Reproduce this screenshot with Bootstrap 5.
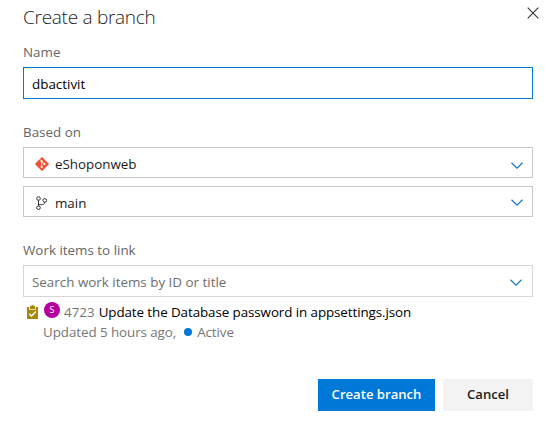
<!DOCTYPE html>
<html lang="en">
<head>
<meta charset="utf-8">
<meta name="viewport" content="width=device-width, initial-scale=1">
<title>Create a branch</title>
<link href="https://cdn.jsdelivr.net/npm/bootstrap@5.3.0/dist/css/bootstrap.min.css" rel="stylesheet">
<style>
body{font-family:"Segoe UI","Open Sans",sans-serif;font-size:13.4px;line-height:20px;color:#1b1b1b;background:#fff}
.dialog-panel{padding:4px 22px 0 23px}
.dialog-title{font-size:19px;font-weight:300;line-height:26px;color:#222;letter-spacing:-.28px}
.close-btn{width:12px;height:12px;margin-top:3px;margin-right:-6px;line-height:0}
.field-label{color:#666;height:20px;margin:23px 0 5px}
.label-first{margin-top:12px}
.field-box{border:1px solid #c8c8c8;border-radius:0;height:31px;padding:2px 9px 0 11px}
.field-name{border-color:#0078d4;height:32px;padding:2px 8px 0;font-size:inherit;color:#000;box-shadow:none!important}
.field-search{height:32px;border-color:#d6d6d6;padding:2px 10px 0 8px;color:#6e6e6e}
.field-text{margin-left:6px;letter-spacing:-.03px}
.chevron-low{margin-top:3px}
.muted-text{color:#767676}
.work-item{padding:5px 0 0 4px}
.task-icon{margin-top:3px}
.work-body{margin-left:6px}
.avatar-dot{width:16px;height:16px;background:#b4009e;color:#fff;font-size:9px;line-height:16px}
.item-id{margin:0 4px}
.item-title{letter-spacing:-.09px}
.item-meta{letter-spacing:-.08px;margin-left:-1px}
.state-dot{width:8px;height:8px;background:#0078d4;margin:0 5px 0 8px}
.actions{margin-top:37px}
.action{height:32px;border:0;border-radius:0;font-size:13.1px;font-weight:600;padding:0}
.action-create{width:117px;background:#0078d7;color:#fff}
.action-cancel{width:90px;background:#f3f3f3;color:#1b1b1b}
svg{display:block;flex:none}
</style>
<script src="https://cdn.jsdelivr.net/npm/bootstrap@5.3.0/dist/js/bootstrap.bundle.min.js"></script>
</head>
<body>
<main class="dialog-panel">
  <header class="d-flex justify-content-between">
    <h1 class="dialog-title mb-0">Create a branch</h1>
    <button type="button" class="close-btn btn p-0 border-0" aria-label="Close"><svg width="12" height="12" viewBox="0 0 12 12" stroke="#333" stroke-width="1.1"><path d="M.7.7 11.3 11.3M11.3.7.7 11.3"/></svg></button>
  </header>
  <label class="field-label label-first d-block" for="name">Name</label>
  <input id="name" class="form-control field-box field-name" value="dbactivit">
  <div class="field-label">Based on</div>
  <div class="field-box d-flex align-items-center">
    <svg width="14" height="14" viewBox="0 0 14 14"><path fill="#f05133" d="M6.4.4a.85.85 0 0 1 1.2 0l6 6a.85.85 0 0 1 0 1.2l-6 6a.85.85 0 0 1-1.2 0l-6-6a.85.85 0 0 1 0-1.2z"/><path d="M5 2.4 6.7 4.2V10M6.9 4.4 9.4 7" stroke="#fff" stroke-width=".9" fill="none"/><g fill="#fff"><circle cx="6.7" cy="4.4" r="1.1"/><circle cx="6.7" cy="10" r="1.1"/><circle cx="9.4" cy="7.1" r="1.1"/></g></svg>
    <span class="field-text flex-grow-1">eShoponweb</span>
    <svg class="chevron-low" width="12" height="7" viewBox="0 0 12 7" fill="none" stroke="#1976b8" stroke-width="1.2"><path d="M.5.7 6 6.1 11.5.7"/></svg>
  </div>
  <div class="field-box d-flex align-items-center mt-2">
    <svg width="14" height="14" viewBox="0 0 14 14" fill="none" stroke="#333"><circle cx="3.5" cy="2.5" r="1.8"/><circle cx="3.5" cy="11.7" r="1.8"/><circle cx="9.8" cy="4.4" r="1.8"/><path d="M3.5 4.3V9.9M9.8 6.2C9.8 8.6 7.7 8.7 3.5 8.7"/></svg>
    <span class="field-text flex-grow-1">main</span>
    <svg width="12" height="7" viewBox="0 0 12 7" fill="none" stroke="#1976b8" stroke-width="1.2"><path d="M.5.7 6 6.1 11.5.7"/></svg>
  </div>
  <div class="field-label">Work items to link</div>
  <div class="field-box field-search d-flex align-items-center">
    <span class="flex-grow-1">Search work items by ID or title</span>
    <svg width="12" height="7" viewBox="0 0 12 7" fill="none" stroke="#1976b8" stroke-width="1.2"><path d="M.5.7 6 6.1 11.5.7"/></svg>
  </div>
  <div class="work-item d-flex">
    <svg class="task-icon" width="11" height="14" viewBox="0 0 11 14"><path fill="#a4880a" d="M0 2h3V1h1.2a1.4 1.4 0 0 1 2.6 0H8v1h3v12H0z"/><path fill="#fff" d="M2.2 2H3v2h5V2h.8v2.8H2.2z"/><path d="M2.3 8.8 4.5 11 9 6.5" fill="none" stroke="#fff" stroke-width="1.5"/></svg>
    <div class="work-body">
      <div class="d-flex">
        <span class="avatar-dot rounded-circle text-center">S</span>
        <span class="item-id muted-text">4723</span>
        <span class="item-title text-black">Update the Database password in appsettings.json</span>
      </div>
      <div class="item-meta d-flex align-items-center muted-text">
        <span>Updated 5 hours ago,</span>
        <span class="state-dot rounded-circle"></span>
        <span>Active</span>
      </div>
    </div>
  </div>
  <footer class="actions d-flex justify-content-end gap-2">
    <button type="button" class="btn action action-create">Create branch</button>
    <button type="button" class="btn action action-cancel">Cancel</button>
  </footer>
</main>
</body>
</html>
